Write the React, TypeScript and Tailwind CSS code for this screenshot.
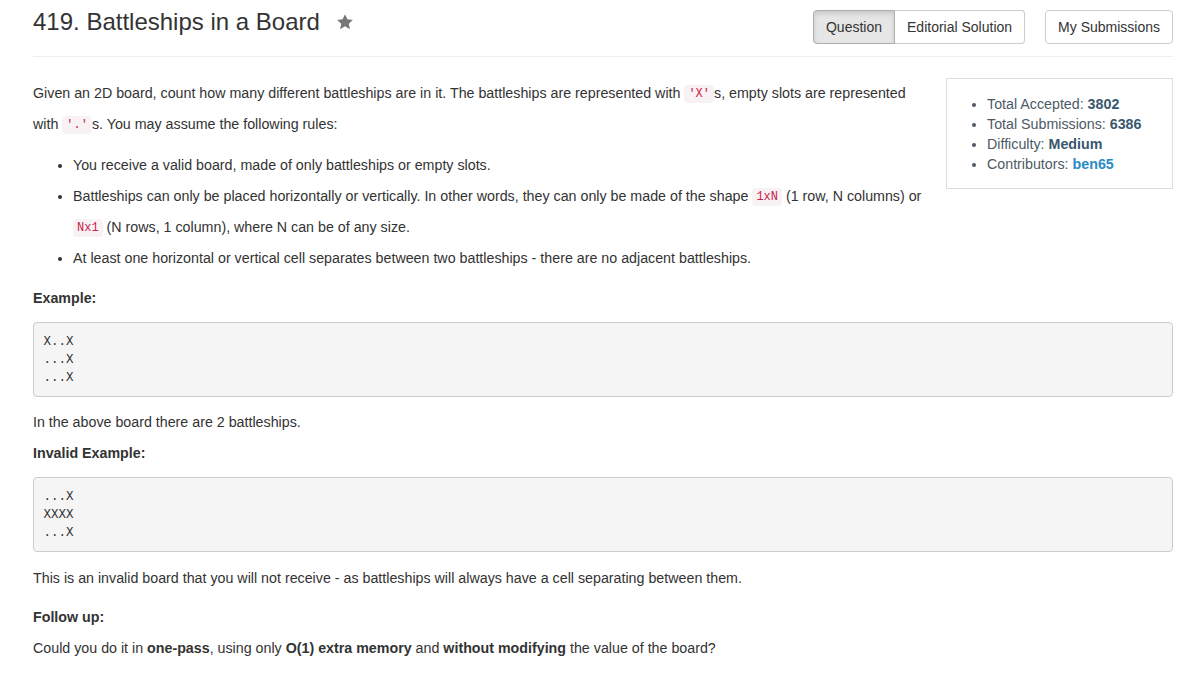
import React from "react";

const Code = ({ children }: { children: React.ReactNode }) => (
  <code className="font-['Liberation_Mono',monospace] text-[12px] leading-[1] align-[1px] text-[#c7254e] bg-[#f9f2f4] px-[4px] py-[2px] rounded-[4px]">
    {children}
  </code>
);

const Pre = ({ children, mb }: { children: React.ReactNode; mb: string }) => (
  <pre
    className={
      "font-['Liberation_Mono',monospace] text-[12.5px] leading-[18px] text-[#333] bg-[#f5f5f5] border border-[#ccc] rounded-[4px] p-[9.5px] m-0 whitespace-pre " +
      mb
    }
  >
    {children}
  </pre>
);

export default function App() {
  return (
    <div className="min-h-[677px] bg-white font-['Liberation_Sans',Arial,sans-serif] text-[14.25px] text-[#333]">
      <div className="ml-[33px] w-[1140px]">
        {/* Header */}
        <div className="flex justify-between items-start h-[57px] border-b border-[#eee]">
          <div className="flex items-center mt-[9px]">
            <h3 className="text-[24px] leading-[26px] font-normal text-[#333]">
              419. Battleships in a Board
            </h3>
            <svg
              className="ml-[16px] mt-[-1px]"
              width="18"
              height="18"
              viewBox="0 0 24 24"
            >
              <path
                d="M12 1.5l3.2 6.9 7.3.8-5.5 5 1.6 7.3L12 17.8l-6.6 3.7 1.6-7.3-5.5-5 7.3-.8z"
                fill="#777"
              />
            </svg>
          </div>
          <div className="flex items-center mt-[10px] gap-[20px] text-[14px]">
            <div className="flex">
              <div className="h-[34px] px-[12px] flex items-center border border-[#adadad] bg-[#e6e6e6] rounded-l-[4px] shadow-[inset_0_3px_5px_rgba(0,0,0,0.125)] text-[#333]">
                Question
              </div>
              <div className="h-[34px] px-[12px] flex items-center border border-l-0 border-[#ccc] bg-white rounded-r-[4px] text-[#333]">
                Editorial Solution
              </div>
            </div>
            <div className="h-[34px] px-[12px] flex items-center border border-[#ccc] bg-white rounded-[4px] text-[#333]">
              My Submissions
            </div>
          </div>
        </div>

        {/* Body */}
        <div className="pt-[21px]">
          <div className="float-right ml-[20px] w-[227px] border border-[#ddd] pt-[15px] pb-[14px]">
            <ul className="list-disc pl-[40px] leading-[20px] text-[#4d5a66] marker:text-[#4d5a66]">
              <li>
                Total Accepted: <b className="text-[#38576e]">3802</b>
              </li>
              <li>
                Total Submissions: <b className="text-[#38576e]">6386</b>
              </li>
              <li>
                Difficulty: <b className="text-[#38576e]">Medium</b>
              </li>
              <li>
                Contributors: <b className="text-[#2a8bc4]">ben65</b>
              </li>
            </ul>
          </div>

          <p className="leading-[31px] mb-[10px]">
            Given an 2D board, count how many different battleships are in it.
            The battleships are represented with <Code>'X'</Code>s, empty slots
            are represented with <Code>'.'</Code>s. You may assume the
            following rules:
          </p>
          <ul className="list-disc pl-[40px] leading-[31px] mb-[9px]">
            <li>
              You receive a valid board, made of only battleships or empty
              slots.
            </li>
            <li>
              Battleships can only be placed horizontally or vertically. In
              other words, they can only be made of the shape <Code>1xN</Code>{" "}
              (1 row, N columns) or <Code>Nx1</Code> (N rows, 1 column), where N
              can be of any size.
            </li>
            <li>
              At least one horizontal or vertical cell separates between two
              battleships - there are no adjacent battleships.
            </li>
          </ul>
          <p className="leading-[31px] mb-[8px] clear-both">
            <b>Example:</b>
          </p>
          <Pre mb="mb-[10px]">{"X..X\n...X\n...X"}</Pre>
          <p className="leading-[31px] mb-[8px]">
            In the above board there are 2 battleships.
            <br />
            <b>Invalid Example:</b>
          </p>
          <Pre mb="mb-[11px]">{"...X\nXXXX\n...X"}</Pre>
          <p className="leading-[31px] mb-[8px]">
            This is an invalid board that you will not receive - as battleships
            will always have a cell separating between them.
          </p>
          <p className="leading-[31px]">
            <b>Follow up:</b>
            <br />
            Could you do it in <b>one-pass</b>, using only{" "}
            <b>O(1) extra memory</b> and <b>without modifying</b> the value of
            the board?
          </p>
        </div>
      </div>
    </div>
  );
}
